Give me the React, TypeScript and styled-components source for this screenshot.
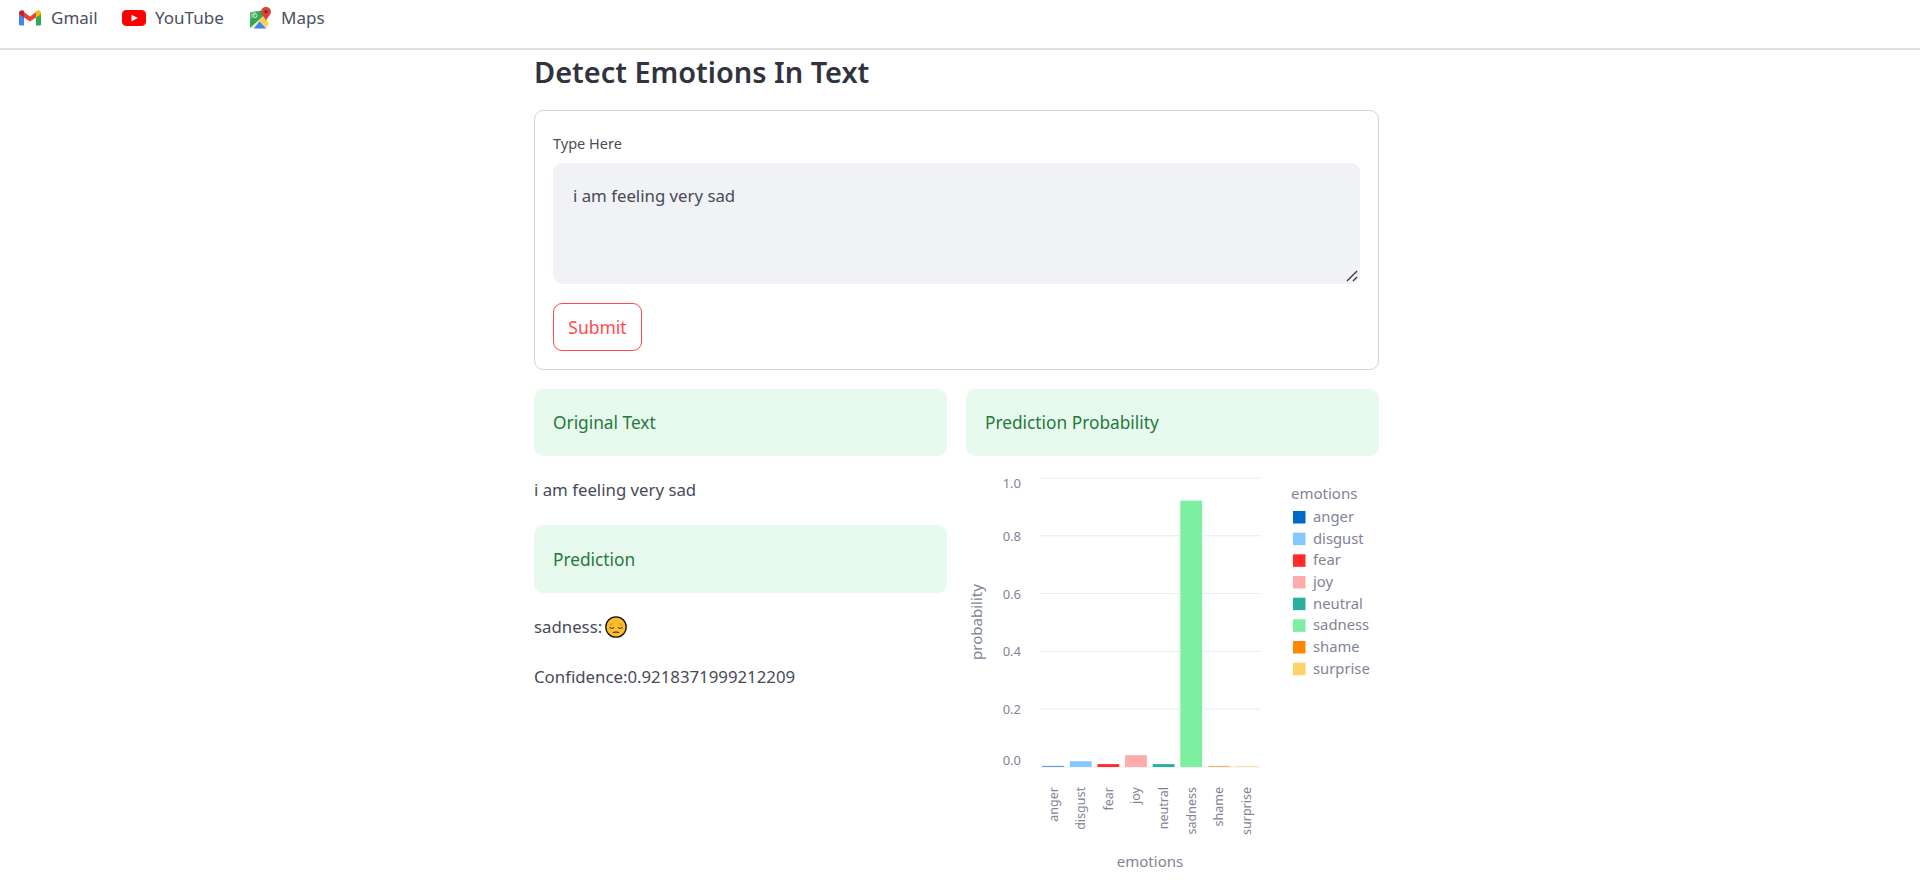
import React from 'react';
import styled, { createGlobalStyle } from 'styled-components';

const GlobalStyle = createGlobalStyle`
  html, body {
    margin: 0;
    padding: 0;
    background: #fff;
    overflow: hidden;
  }

  body {
    font-family: 'Noto Sans', 'Open Sans', sans-serif;
    color: #484b57;
  }
`;

const Page = styled.div`
  width: 1920px;
  height: 885px;
  overflow: hidden;
  display: flex;
  flex-direction: column;
`;

const NavBar = styled.nav`
  height: 50px;
  box-sizing: border-box;
  border-bottom: 2px solid #e0e0e0;
  display: flex;
  align-items: flex-start;
  padding: 6px 0 0 19px;
`;

const NavLink = styled.a<{ $width: number; $gap: number }>`
  width: ${(p) => p.$width}px;
  display: flex;
  align-items: center;
  gap: ${(p) => p.$gap}px;
  font-size: 17px;
  line-height: 24px;
  color: #4a5060;
`;

const Main = styled.main`
  width: 845px;
  margin-left: 534px;
  display: flex;
  flex-direction: column;
`;

const Title = styled.h1`
  margin: 0;
  height: 60px;
  font-size: 28.9px;
  line-height: 44px;
  font-weight: 600;
  color: #31333f;
`;

const FormCard = styled.form`
  height: 260px;
  box-sizing: border-box;
  border: 1px solid #d3d4d8;
  border-radius: 9px;
  padding: 18px;
  display: flex;
  flex-direction: column;
  align-items: flex-start;
`;

const FieldLabel = styled.label`
  font-size: 14.5px;
  line-height: 28px;
  color: #4a4d59;
  margin-bottom: 6px;
`;

const TextBox = styled.div`
  width: 100%;
  height: 122px;
  box-sizing: border-box;
  background: #f0f2f6;
  border-radius: 9px;
  padding: 20px 20px;
  font-size: 16.8px;
  line-height: 26px;
  color: #484b57;
  position: relative;
`;

const Resizer = styled.svg`
  position: absolute;
  right: 1px;
  bottom: 1px;
`;

const SubmitButton = styled.button`
  margin-top: 19px;
  width: 89px;
  height: 48px;
  box-sizing: border-box;
  padding: 0;
  background: #fff;
  border: 1px solid #ff4b4b;
  border-radius: 9px;
  font: inherit;
  font-size: 17.5px;
  color: #ff4b4b;
`;

const Columns = styled.div`
  margin-top: 19px;
  display: grid;
  grid-template-columns: 413px 413px;
  column-gap: 19px;
`;

const Column = styled.section`
  display: flex;
  flex-direction: column;
  align-items: stretch;
`;

const Alert = styled.div<{ $top?: number; $height?: number }>`
  height: ${(p) => p.$height ?? 67}px;
  box-sizing: border-box;
  margin-top: ${(p) => p.$top ?? 0}px;
  background: #e8f9ee;
  border-radius: 9px;
  padding: 0 19px;
  display: flex;
  align-items: center;
  font-size: 17.3px;
  color: #1f7a3d;
`;

const Para = styled.p<{ $top: number }>`
  margin: ${(p) => p.$top}px 0 0;
  display: flex;
  align-items: center;
  height: 26px;
  font-size: 16.8px;
  line-height: 26px;
  color: #484b57;
`;

const EmojiBox = styled.svg`
  margin-left: 3px;
`;

const Chart = styled.svg`
  display: block;
  margin-top: 11px;
`;

const GmailIcon = () => (
  <svg width="22" height="16" viewBox="0 0 22 17" preserveAspectRatio="none">
    <path d="M0 3.5 V15.2 Q0 16.5 1.3 16.5 H5 V7.5 Z" fill="#4285f4" />
    <path d="M22 3.5 V15.2 Q22 16.5 20.7 16.5 H17 V7.5 Z" fill="#34a853" />
    <path d="M5 8 L11 12.3 L17 8 V2.2 L11 6.8 L5 2.2 Z" fill="#ea4335" />
    <path d="M0 3.2 C0 .5 3 -.6 5 1 V8 L0 4.3 Z" fill="#c5221f" />
    <path d="M22 3.2 C22 .5 19 -.6 17 1 V8 L22 4.3 Z" fill="#fbbc04" />
  </svg>
);

const YouTubeIcon = () => (
  <svg width="24" height="16" viewBox="0 0 24 17" preserveAspectRatio="none">
    <rect width="24" height="17" rx="4.5" fill="#ff0000" />
    <path d="M9.5 5 L15.8 8.5 L9.5 12 Z" fill="#fff" />
  </svg>
);

const MapsIcon = () => (
  <svg width="22" height="22" viewBox="0 0 22 23" preserveAspectRatio="none">
    <path d="M0 5.5 L13 3.5 V10 L0 22 Z" fill="#34a853" />
    <path d="M0 5.5 L7 4.5 L5 9 L0 13 Z" fill="#6cbb70" />
    <path d="M1 22.5 L9 14 L16 22.5 Z" fill="#fbe9a0" />
    <path d="M4 22.5 L9.5 15 L16.5 22.5 Z" fill="#4285f4" />
    <path d="M9 14 L13 10 L19 17 L16 22 Z" fill="#fbd34d" />
    <circle cx="5" cy="9" r="2" fill="none" stroke="#fff" strokeWidth="0.8" />
    <path d="M16 0 C12.8 0 11 2.4 11 5 C11 8.5 15 10.5 16 15 C17 10.5 21 8.5 21 5 C21 2.4 19.2 0 16 0 Z" fill="#db4437" />
    <circle cx="16" cy="5" r="1.8" fill="#8e2a22" />
  </svg>
);

const SadEmoji = () => (
  <EmojiBox width="22" height="22" viewBox="0 0 22 22">
    <circle cx="11" cy="11" r="10.2" fill="#fdbb2d" stroke="#111" strokeWidth="1.3" />
    <path d="M4.5 9.5 Q6.5 9 8 7.2 M17.5 9.5 Q15.5 9 14 7.2" fill="none" stroke="#d98a10" strokeWidth="1" />
    <path d="M4.5 11.5 Q6.5 13.4 9 11.6 M13 11.6 Q15.5 13.4 17.5 11.5" fill="none" stroke="#222" strokeWidth="1" />
    <path d="M8 16.6 Q11 15.4 14 16.6" fill="none" stroke="#222" strokeWidth="1.1" />
  </EmojiBox>
);

interface Emotion {
  name: string;
  color: string;
  value: number;
}

const emotions: Emotion[] = [
  { name: 'anger', color: '#0068c9', value: 0.004 },
  { name: 'disgust', color: '#83c9ff', value: 0.02 },
  { name: 'fear', color: '#ff2b2b', value: 0.01 },
  { name: 'joy', color: '#ffabab', value: 0.041 },
  { name: 'neutral', color: '#29b09d', value: 0.01 },
  { name: 'sadness', color: '#7defa1', value: 0.9218 },
  { name: 'shame', color: '#ff8700', value: 0.004 },
  { name: 'surprise', color: '#ffd16a', value: 0.004 }
];

const PLOT_LEFT = 74;
const PLOT_RIGHT = 295;
const BASE_Y = 300;
const UNIT = 289;
const AXIS = '#808495';
const GRID = '#e9ecf3';

// the first and last tick labels sit inside the plot, the others on their line
const tickOffset = (tick: number) => (tick === 1 ? 5 : tick === 0 ? -7 : 0);

const ProbabilityChart = () => {
  const band = (PLOT_RIGHT - PLOT_LEFT) / emotions.length;

  return (
    <Chart width="413" height="418" viewBox="0 0 413 418" fontFamily="'Noto Sans', sans-serif">
      {[0, 0.2, 0.4, 0.6, 0.8, 1].map((tick) => (
        <g key={tick}>
          <line x1={PLOT_LEFT} x2={PLOT_RIGHT} y1={BASE_Y - tick * UNIT} y2={BASE_Y - tick * UNIT} stroke={GRID} strokeWidth="1" />
          <text x="55" y={BASE_Y - tick * UNIT + tickOffset(tick) + 5} textAnchor="end" fontSize="13" fill={AXIS}>
            {tick.toFixed(1)}
          </text>
        </g>
      ))}
      {emotions.map((e, i) => {
        const height = e.value * UNIT;

        return (
          <g key={e.name}>
            <rect x={PLOT_LEFT + i * band + 2.2} y={BASE_Y - height} width={band - 5.8} height={height} fill={e.color} opacity={e.value < 0.005 ? 0.6 : 1} />
            <text transform={`translate(${PLOT_LEFT + i * band + 17.5} 320) rotate(-90)`} textAnchor="end" fontSize="12.5" fill={AXIS}>
              {e.name}
            </text>
          </g>
        );
      })}
      <text transform="translate(16 155) rotate(-90)" textAnchor="middle" fontSize="15" fill={AXIS}>probability</text>
      <text x="184" y="400" textAnchor="middle" fontSize="15" fill={AXIS}>emotions</text>
      <text x="325" y="32" fontSize="15" fill={AXIS}>emotions</text>
      {emotions.map((e, i) => (
        <g key={e.name}>
          <rect x="327" y={44 + i * 21.67} width="12.5" height="12.5" fill={e.color} />
          <text x="347" y={55 + i * 21.67} fontSize="14.8" fill={AXIS}>{e.name}</text>
        </g>
      ))}
    </Chart>
  );
};

const App = () => (
  <Page>
    <GlobalStyle />
    <NavBar>
      <NavLink $width={103} $gap={10}><GmailIcon />Gmail</NavLink>
      <NavLink $width={128} $gap={9}><YouTubeIcon />YouTube</NavLink>
      <NavLink $width={100} $gap={9}><MapsIcon />Maps</NavLink>
    </NavBar>
    <Main>
      <Title>Detect Emotions In Text</Title>
      <FormCard>
        <FieldLabel>Type Here</FieldLabel>
        <TextBox>
          i am feeling very sad
          <Resizer width="14" height="14" viewBox="0 0 14 14">
            <path d="M2 12 L12 2 M8 12 L12 8" stroke="#333" strokeWidth="1.3" />
          </Resizer>
        </TextBox>
        <SubmitButton type="button">Submit</SubmitButton>
      </FormCard>
      <Columns>
        <Column>
          <Alert>Original Text</Alert>
          <Para $top={21}>i am feeling very sad</Para>
          <Alert $top={22} $height={68}>Prediction</Alert>
          <Para $top={21}>sadness:<SadEmoji /></Para>
          <Para $top={24}>Confidence:0.9218371999212209</Para>
        </Column>
        <Column>
          <Alert>Prediction Probability</Alert>
          <ProbabilityChart />
        </Column>
      </Columns>
    </Main>
  </Page>
);

export default App;
